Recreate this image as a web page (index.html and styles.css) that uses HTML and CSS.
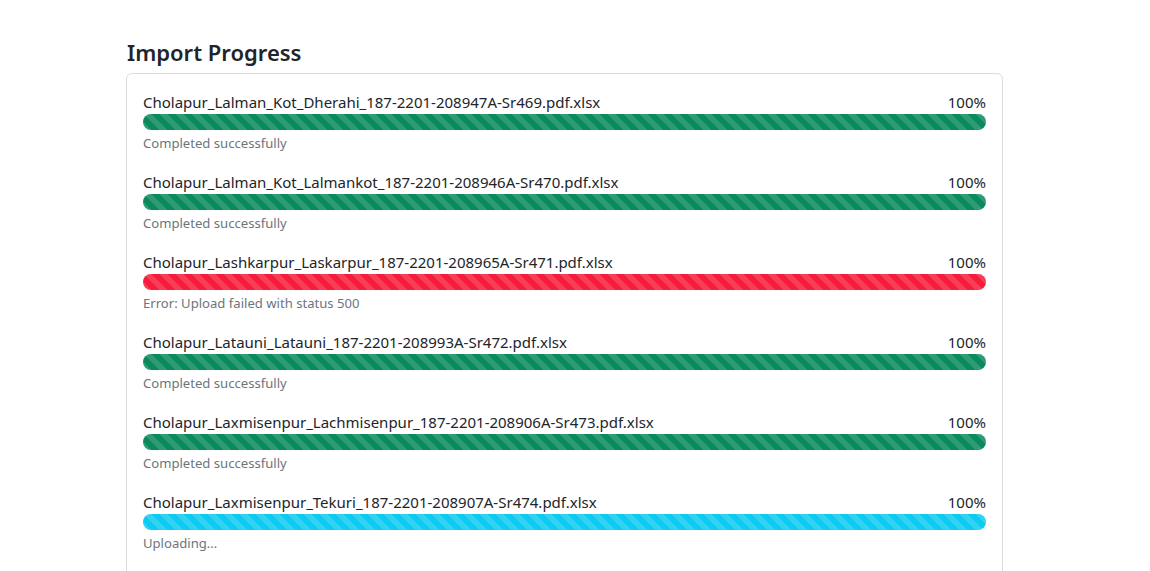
FILE: index.html
```html
<!DOCTYPE html>
<html lang="en">
<head>
<meta charset="utf-8">
<title>Import Progress</title>
<link rel="stylesheet" href="styles.css">
</head>
<body>
<div class="page">
  <h4 class="title">Import Progress</h4>
  <div class="card">
    <div class="item">
      <div class="item-head"><span>Cholapur_Lalman_Kot_Dherahi_187-2201-208947A-Sr469.pdf.xlsx</span><span>100%</span></div>
      <div class="progress"><div class="bar bar-success" style="width:100%"></div></div>
      <div class="status">Completed successfully</div>
    </div>
    <div class="item">
      <div class="item-head"><span>Cholapur_Lalman_Kot_Lalmankot_187-2201-208946A-Sr470.pdf.xlsx</span><span>100%</span></div>
      <div class="progress"><div class="bar bar-success" style="width:100%"></div></div>
      <div class="status">Completed successfully</div>
    </div>
    <div class="item">
      <div class="item-head"><span>Cholapur_Lashkarpur_Laskarpur_187-2201-208965A-Sr471.pdf.xlsx</span><span>100%</span></div>
      <div class="progress"><div class="bar bar-danger" style="width:100%"></div></div>
      <div class="status">Error: Upload failed with status 500</div>
    </div>
    <div class="item">
      <div class="item-head"><span>Cholapur_Latauni_Latauni_187-2201-208993A-Sr472.pdf.xlsx</span><span>100%</span></div>
      <div class="progress"><div class="bar bar-success" style="width:100%"></div></div>
      <div class="status">Completed successfully</div>
    </div>
    <div class="item">
      <div class="item-head"><span>Cholapur_Laxmisenpur_Lachmisenpur_187-2201-208906A-Sr473.pdf.xlsx</span><span>100%</span></div>
      <div class="progress"><div class="bar bar-success" style="width:100%"></div></div>
      <div class="status">Completed successfully</div>
    </div>
    <div class="item">
      <div class="item-head"><span>Cholapur_Laxmisenpur_Tekuri_187-2201-208907A-Sr474.pdf.xlsx</span><span>100%</span></div>
      <div class="progress"><div class="bar bar-info" style="width:100%"></div></div>
      <div class="status">Uploading...</div>
    </div>
  </div>
</div>
</body>
</html>
```
FILE: styles.css
```css
html, body {
  margin: 0;
  padding: 0;
  overflow: hidden;
  background: #fff;
}
body {
  font-family: "Noto Sans", "Open Sans", sans-serif;
  font-size: 15px;
  line-height: 24px;
  color: #212529;
}
.page {
  width: 877px;
  margin-left: 126px;
  padding-top: 38px;
}
.title {
  margin: 0 0 7px 1px;
  font-size: 22px;
  font-weight: 600;
  line-height: 28px;
  height: 28px;
}
.card {
  border: 1px solid #dcdcdc;
  border-radius: 6px;
  padding: 16px 16px 16px;
}
.item {
  margin-bottom: 16px;
}
.item-head {
  display: flex;
  justify-content: space-between;
  height: 24px;
}
.progress {
  height: 16px;
  border-radius: 8px;
  overflow: hidden;
  background: #e9ecef;
}
.bar {
  height: 100%;
  background-image: linear-gradient(45deg, rgba(255,255,255,.15) 25%, transparent 25%, transparent 50%, rgba(255,255,255,.15) 50%, rgba(255,255,255,.15) 75%, transparent 75%, transparent);
  background-size: 16px 16px;
}
.bar-success { background-color: #0a8a5c; }
.bar-danger { background-color: #f71b3c; }
.bar-info { background-color: #0dcaf0; }
.status {
  margin-top: 3px;
  font-size: 13.1px;
  line-height: 21px;
  color: #6c757d;
}
```
